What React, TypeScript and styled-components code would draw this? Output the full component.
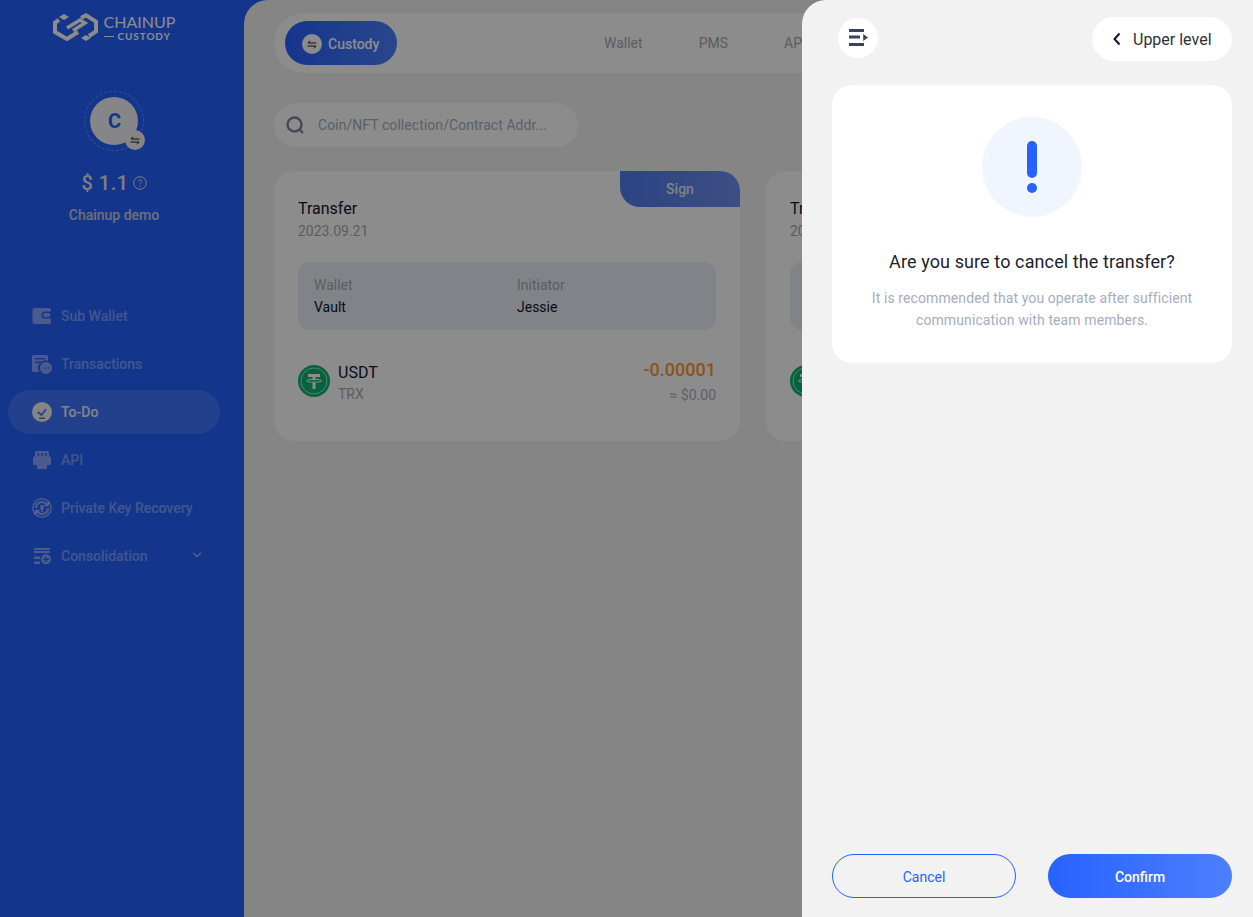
import React from 'react';
import styled, { createGlobalStyle } from 'styled-components';

const GlobalStyle = createGlobalStyle`
  html, body {
    margin: 0;
    height: 100%;
    overflow: hidden;
    font-family: Roboto, "Liberation Sans", sans-serif;
  }
  * { box-sizing: border-box; }
`;

const Page = styled.div`
  display: flex;
  width: 100%;
  height: 100vh;
  background: #2662ff;
  overflow: hidden;
`;

const Sidebar = styled.aside`
  width: 244px;
  flex-shrink: 0;
  display: flex;
  flex-direction: column;
  align-items: center;
  padding: 13px 16px 0 0;
`;

const Logo = styled.div`
  display: flex;
  align-items: flex-start;
  gap: 6px;
  height: 28px;
  margin-left: 0;
  color: #fff;
`;

const LogoText = styled.div`
  display: flex;
  flex-direction: column;
  width: 72px;
`;

const LogoName = styled.span`
  font-family: Lato, sans-serif;
  font-size: 16px;
  line-height: 15px;
  letter-spacing: 0;
  margin-top: 1px;
  white-space: nowrap;
`;

const LogoSub = styled.span`
  display: flex;
  align-items: center;
  gap: 4px;
  margin-top: 2px;
  font-family: Lato, sans-serif;
  font-size: 10px;
  line-height: 10px;
  font-weight: 700;
  letter-spacing: 0.9px;
  white-space: nowrap;
  &::before {
    content: '';
    width: 10px;
    height: 1px;
    background: #fff;
  }
`;

const AvatarRing = styled.div`
  position: relative;
  width: 60px;
  height: 60px;
  margin-top: 50px;
  display: flex;
  align-items: center;
  justify-content: center;
  border-radius: 50%;
  border: 1px dashed rgba(255, 255, 255, 0.3);
`;

const Avatar = styled.div`
  width: 48px;
  height: 48px;
  border-radius: 50%;
  background: #f4f5fa;
  color: #2662ff;
  font-size: 20px;
  font-weight: 700;
  display: flex;
  align-items: center;
  justify-content: center;
  padding-left: 1px;
`;

const SwapBadge = styled.div`
  position: absolute;
  right: -2px;
  bottom: 0;
  width: 20px;
  height: 20px;
  border-radius: 50%;
  background: #f2f2f2;
  color: #1a1a1a;
  display: flex;
  align-items: center;
  justify-content: center;
`;

const Balance = styled.div`
  display: flex;
  align-items: center;
  gap: 4px;
  margin-top: 20px;
  height: 24px;
  color: #e4e6ee;
  font-size: 20px;
  font-weight: 500;
  letter-spacing: 0.5px;
`;

const OrgName = styled.div`
  margin-top: 8px;
  height: 24px;
  line-height: 24px;
  font-size: 14px;
  font-weight: 500;
  color: #c8cde0;
`;

const Menu = styled.nav`
  align-self: stretch;
  display: flex;
  flex-direction: column;
  gap: 4px;
  margin: 67px -16px 0 0;
  padding: 0 24px 0 8px;
`;

const MenuItem = styled.div<{ $active?: boolean }>`
  height: 44px;
  display: flex;
  align-items: center;
  gap: 9px;
  padding: 0 18px 0 24px;
  border-radius: 22px;
  font-size: 14px;
  font-weight: 500;
  background: ${p => (p.$active ? 'rgba(255, 255, 255, 0.12)' : 'transparent')};
  color: ${p => (p.$active ? '#f2f2f2' : 'rgba(255, 255, 255, 0.4)')};
`;

const MenuIcon = styled.span<{ $active?: boolean }>`
  width: 20px;
  height: 20px;
  flex-shrink: 0;
  display: flex;
  color: ${p => (p.$active ? '#f2f2f2' : 'rgba(255, 255, 255, 0.45)')};
`;

const Chevron = styled.span`
  margin: 0 0 2px auto;
  display: flex;
  color: rgba(255, 255, 255, 0.5);
`;

const Main = styled.main`
  flex: 1;
  min-width: 0;
  background: #f2f2f2;
  border-top-left-radius: 24px;
  padding: 13px 0 0 30px;
  overflow: hidden;
`;

const TopBar = styled.div`
  width: 1200px;
  height: 60px;
  display: flex;
  align-items: center;
  padding-left: 11px;
  border-radius: 30px;
  background: #fff;
`;

const ProductPill = styled.div`
  width: 112px;
  height: 44px;
  border-radius: 22px;
  background: linear-gradient(90deg, #2662ff, #4d7fff);
  color: #fff;
  font-size: 14px;
  font-weight: 500;
  display: flex;
  align-items: center;
  gap: 6px;
  padding: 2px 0 0 17px;
`;

const PillBadge = styled.span`
  width: 20px;
  height: 20px;
  border-radius: 50%;
  background: #fff;
  color: #1a1a1a;
  display: flex;
  align-items: center;
  justify-content: center;
`;

const Tabs = styled.div`
  display: flex;
  gap: 56px;
  margin-left: 207px;
  margin-top: -1px;
`;

const Tab = styled.span`
  font-size: 14px;
  color: #a8a8ae;
`;

const SearchBox = styled.div`
  width: 304px;
  height: 44px;
  margin-top: 30px;
  display: flex;
  align-items: center;
  gap: 14px;
  padding-left: 12px;
  border-radius: 22px;
  background: #fff;
  color: #a4adc2;
  font-size: 14px;
  letter-spacing: 0.06px;
`;

const SearchIcon = styled.span`
  display: flex;
  color: #7d8699;
`;

const Cards = styled.div`
  display: flex;
  gap: 26px;
  margin-top: 24px;
`;

const Card = styled.section`
  position: relative;
  width: 466px;
  height: 270px;
  flex-shrink: 0;
  padding: 28px 24px 0;
  border-radius: 20px;
  background: #fff;
  overflow: hidden;
`;

const SignTag = styled.div`
  position: absolute;
  top: 0;
  right: 0;
  width: 120px;
  height: 36px;
  line-height: 36px;
  text-align: center;
  border-bottom-left-radius: 20px;
  background: linear-gradient(90deg, #4f7cf0, #6f8fee);
  color: #e8ecf8;
  font-size: 14px;
  font-weight: 500;
`;

const CardTitle = styled.div`
  font-size: 16px;
  line-height: 20px;
  color: #12152a;
`;

const CardDate = styled.div`
  margin-top: 4px;
  font-size: 14px;
  line-height: 16px;
  color: #a8a8ae;
`;

const InfoBox = styled.div`
  display: grid;
  grid-template-columns: 203px 1fr;
  height: 68px;
  margin-top: 23px;
  padding: 12px 16px;
  border-radius: 12px;
  background: #eaf1f8;
`;

const InfoLabel = styled.div`
  font-size: 14px;
  line-height: 22px;
  color: #a8a8ae;
`;

const InfoValue = styled.div`
  font-size: 14px;
  line-height: 22px;
  color: #12152a;
`;

const AssetRow = styled.div`
  display: flex;
  align-items: flex-start;
  margin-top: 30px;
`;

const CoinIcon = styled.span`
  display: flex;
  margin-top: 5px;
  margin-right: 8px;
`;

const AssetInfo = styled.div`
  padding-top: 3px;
`;

const AssetName = styled.div`
  font-size: 16px;
  line-height: 20px;
  color: #12152a;
`;

const AssetChain = styled.div`
  margin-top: 1px;
  font-size: 14px;
  line-height: 20px;
  color: #a8a8ae;
`;

const AssetAmounts = styled.div`
  margin-left: auto;
  text-align: right;
`;

const Amount = styled.div`
  font-size: 18px;
  line-height: 20px;
  font-weight: 500;
  color: #ff9a2e;
`;

const Fiat = styled.div`
  margin-top: 5px;
  font-size: 14px;
  line-height: 20px;
  color: #a8aebe;
`;

const Overlay = styled.div`
  position: fixed;
  inset: 0;
  background: rgba(0, 0, 0, 0.45);
`;

const Drawer = styled.aside`
  position: fixed;
  top: 0;
  right: 0;
  bottom: 0;
  width: 451px;
  display: flex;
  flex-direction: column;
  padding: 17px 21px 19px 30px;
  border-top-left-radius: 24px;
  background: #f2f2f2;
`;

const DrawerHead = styled.div`
  display: flex;
  justify-content: space-between;
  align-items: flex-start;
  padding-left: 6px;
`;

const CollapseButton = styled.button`
  width: 40px;
  height: 40px;
  margin-top: 1px;
  padding: 0;
  border: 0;
  border-radius: 50%;
  background: #fff;
  color: #3a4257;
  display: flex;
  align-items: center;
  justify-content: center;
`;

const BackButton = styled.button`
  width: 140px;
  height: 44px;
  padding: 0 0 0 20px;
  border: 0;
  border-radius: 22px;
  background: #fff;
  color: #2e313a;
  font-family: inherit;
  font-size: 16px;
  display: flex;
  align-items: center;
  gap: 11px;
`;

const ConfirmCard = styled.div`
  height: 278px;
  margin-top: 24px;
  padding-top: 32px;
  border-radius: 20px;
  background: #fff;
  display: flex;
  flex-direction: column;
  align-items: center;
  text-align: center;
`;

const WarnCircle = styled.div`
  width: 100px;
  height: 100px;
  border-radius: 50%;
  background: #f0f5ff;
  display: flex;
  flex-direction: column;
  align-items: center;
  justify-content: center;
  gap: 5px;
`;

const WarnBar = styled.span`
  width: 10px;
  height: 37px;
  border-radius: 5px;
  background: #2662ff;
`;

const WarnDot = styled.span`
  width: 10px;
  height: 10px;
  border-radius: 50%;
  background: #2662ff;
`;

const ConfirmTitle = styled.div`
  margin-top: 32px;
  font-size: 18px;
  line-height: 26px;
  letter-spacing: 0.11px;
  color: #1c1f2e;
`;

const ConfirmText = styled.div`
  width: 340px;
  margin-top: 12px;
  font-size: 14px;
  line-height: 22px;
  letter-spacing: 0.1px;
  color: #a4adc2;
`;

const DrawerFoot = styled.div`
  margin-top: auto;
  display: flex;
  justify-content: space-between;
`;

const FootButton = styled.button<{ $primary?: boolean }>`
  width: 184px;
  height: 44px;
  padding: 2px 0 0;
  border-radius: 22px;
  font-family: inherit;
  font-size: 14px;
  font-weight: ${p => (p.$primary ? 500 : 400)};
  color: ${p => (p.$primary ? '#fff' : '#2662ff')};
  border: ${p => (p.$primary ? '0' : '1px solid #2662ff')};
  background: ${p => (p.$primary ? 'linear-gradient(90deg, #2662ff, #4d7fff)' : 'transparent')};
`;

const SwapIcon = () => (
  <svg width="10" height="9" viewBox="0 0 10 9" fill="none" stroke="currentColor" strokeWidth="1">
    <path d="M3 .8 1 3h8.500M7 8.200 9 6H.5" />
  </svg>
);

const ChainLogo = () => (
  <svg width="45" height="28" viewBox="0 0 45 28" fill="none" stroke="currentColor" strokeWidth="4">
    <path d="M6 7 2 9.500V19L14 26 25 19" />
    <path d="M14 15 27 7 32 10 20 17.500" strokeWidth="3.500" />
    <path d="M28 5 33 2.300 43 8.500V18.500L36 23" />
    <path d="M11 1 16 4 11 7 6 4Z" fill="currentColor" stroke="none" />
    <path d="M33 22 38 25 33 28 28 25Z" fill="currentColor" stroke="none" />
  </svg>
);

const WalletIcon = () => (
  <svg width="20" height="20" viewBox="0 0 20 20">
    <path
      fill="currentColor"
      fillRule="evenodd"
      d="M2.500 2H17a2 2 0 0 1 2 2v1.500h-6a3.500 3.500 0 0 0 0 7h6V16a2 2 0 0 1-2 2H2.500a2 2 0 0 1-2-2V4a2 2 0 0 1 2-2Z"
    />
    <rect x="11" y="7" width="7.500" height="4" rx="2" fill="currentColor" />
  </svg>
);

const TransactionsIcon = () => (
  <svg width="20" height="20" viewBox="0 0 20 20">
    <path
      fill="currentColor"
      fillRule="evenodd"
      d="M1.500 1H14.500A1.500 1.500 0 0 1 16 2.500V6.800A7.500 7.500 0 0 0 7.300 18H1.500A1.500 1.500 0 0 1 0 16.500v-14A1.500 1.500 0 0 1 1.500 1ZM3 4v1.500h10V4Zm0 3.500V9h6V7.500Z"
    />
    <path
      fill="currentColor"
      fillRule="evenodd"
      d="M14 8a6 6 0 1 1 0 12 6 6 0 0 1 0-12ZM10.800 13.400v1.200H12v-1.200Zm2.600 0v1.200h1.200v-1.200Zm2.600 0v1.200h1.200v-1.200Z"
    />
  </svg>
);

const TodoIcon = () => (
  <svg width="20" height="20" viewBox="0 0 20 20">
    <circle cx="10" cy="10" r="10" fill="currentColor" />
    <path d="M5.800 9.800 9.500 13 14 7.300" fill="none" stroke="#4270f0" strokeWidth="1.700" />
    <path d="M7 16.300h6" stroke="#4270f0" strokeWidth="1.400" />
  </svg>
);

const ApiIcon = () => (
  <svg width="20" height="20" viewBox="0 0 20 20">
    <path
      fill="currentColor"
      fillRule="evenodd"
      d="M4.500 1h11A1.500 1.500 0 0 1 17 2.500V6.500h.5A1.500 1.500 0 0 1 19 8v5.500a1.500 1.500 0 0 1-1.500 1.500H15v3a1 1 0 0 1-1 1H6a1 1 0 0 1-1-1v-3H2.500A1.500 1.500 0 0 1 1 13.500V8a1.500 1.500 0 0 1 1.500-1.500H3v-4A1.500 1.500 0 0 1 4.500 1Zm1 2v3h1.600V3Zm3.700 0v3h1.600V3Zm3.700 0v3h1.600V3Z"
    />
  </svg>
);

const RecoveryIcon = () => (
  <svg width="20" height="20" viewBox="0 0 20 20" fill="none" stroke="currentColor">
    <circle cx="10" cy="10" r="9.200" strokeWidth="1.500" />
    <path d="M4 10A6 6 0 0 1 14.500 6M16 10A6 6 0 0 1 5.500 14" strokeWidth="2.400" />
    <path d="M16.500 3.500v4.300h-4.300M3.500 16.500v-4.300h4.300" strokeWidth="1" fill="currentColor" />
    <circle cx="10" cy="9" r="2.200" fill="currentColor" stroke="none" />
    <path d="M10 10v4" strokeWidth="2" />
  </svg>
);

const ConsolidationIcon = () => (
  <svg width="20" height="20" viewBox="0 0 20 20">
    <path fill="currentColor" d="M2 2h16v2H2ZM2 5h16v2H2ZM2 10.500h6V13H2ZM2 15.500h6V18H2Z" />
    <path
      fill="currentColor"
      fillRule="evenodd"
      d="M14 8.300a5 5 0 1 1 0 10 5 5 0 0 1 0-10Zm-.7 2.200v2.100h-2.100V14h2.100v2.100h1.400V14h2.100v-1.400h-2.100v-2.100Z"
    />
  </svg>
);

const CoinUsdt = () => (
  <svg width="32" height="32" viewBox="0 0 32 32">
    <circle cx="16" cy="16" r="16" fill="#10b272" />
    <circle cx="16" cy="16" r="13" fill="none" stroke="#9aeccb" strokeWidth="1" />
    <path fill="#fff" d="M10 9h12v3h-4.500v3.200c-.9 0-2.100 0-3 0V12H10ZM14.500 17.300h3V24h-3Z" />
    <ellipse cx="16" cy="15.800" rx="7.500" ry="1.500" fill="none" stroke="#fff" strokeWidth="1" />
  </svg>
);

const menu = [
  { label: 'Sub Wallet', icon: <WalletIcon /> },
  { label: 'Transactions', icon: <TransactionsIcon /> },
  { label: 'To-Do', icon: <TodoIcon />, active: true },
  { label: 'API', icon: <ApiIcon /> },
  { label: 'Private Key Recovery', icon: <RecoveryIcon /> },
  { label: 'Consolidation', icon: <ConsolidationIcon />, more: true },
];

// the second card sits under the drawer, only its left edge ever shows
const transfers = [
  { id: 1, initiator: 'Jessie' },
  { id: 2, initiator: '' },
];

const App = () => (
  <Page>
    <GlobalStyle />
    <Sidebar>
      <Logo>
        <ChainLogo />
        <LogoText>
          <LogoName>CHAINUP</LogoName>
          <LogoSub>CUSTODY</LogoSub>
        </LogoText>
      </Logo>
      <AvatarRing>
        <Avatar>C</Avatar>
        <SwapBadge>
          <SwapIcon />
        </SwapBadge>
      </AvatarRing>
      <Balance>
        $ 1.1
        <svg width="14" height="14" viewBox="0 0 14 14" fill="none" stroke="currentColor">
          <circle cx="7" cy="7" r="6.300" />
          <path d="M5.200 5.500a1.800 1.800 0 1 1 2.700 1.600c-.6.300-.9.700-.9 1.300" />
          <path d="M7 9.600v1.200" />
        </svg>
      </Balance>
      <OrgName>Chainup demo</OrgName>
      <Menu>
        {menu.map(item => (
          <MenuItem key={item.label} $active={item.active}>
            <MenuIcon $active={item.active}>{item.icon}</MenuIcon>
            {item.label}
            {item.more && (
              <Chevron>
                <svg width="10" height="6" viewBox="0 0 10 6" fill="none" stroke="currentColor" strokeWidth="1.600">
                  <path d="M1 1l4 3.500L9 1" />
                </svg>
              </Chevron>
            )}
          </MenuItem>
        ))}
      </Menu>
    </Sidebar>

    <Main>
      <TopBar>
        <ProductPill>
          <PillBadge>
            <SwapIcon />
          </PillBadge>
          Custody
        </ProductPill>
        <Tabs>
          <Tab>Wallet</Tab>
          <Tab>PMS</Tab>
          <Tab>API</Tab>
        </Tabs>
      </TopBar>
      <SearchBox>
        <SearchIcon>
          <svg width="18" height="18" viewBox="0 0 18 18" fill="none" stroke="currentColor" strokeWidth="2.400">
            <circle cx="8.500" cy="8.500" r="7" />
            <path d="M13.500 13.500 17 17" />
          </svg>
        </SearchIcon>
        Coin/NFT collection/Contract Addr...
      </SearchBox>
      <Cards>
        {transfers.map(transfer => (
          <Card key={transfer.id}>
            <SignTag>Sign</SignTag>
            <CardTitle>Transfer</CardTitle>
            <CardDate>2023.09.21</CardDate>
            <InfoBox>
              <div>
                <InfoLabel>Wallet</InfoLabel>
                <InfoValue>Vault</InfoValue>
              </div>
              {transfer.initiator && (
                <div>
                  <InfoLabel>Initiator</InfoLabel>
                  <InfoValue>{transfer.initiator}</InfoValue>
                </div>
              )}
            </InfoBox>
            <AssetRow>
              <CoinIcon>
                <CoinUsdt />
              </CoinIcon>
              <AssetInfo>
                <AssetName>USDT</AssetName>
                <AssetChain>TRX</AssetChain>
              </AssetInfo>
              <AssetAmounts>
                <Amount>-0.00001</Amount>
                <Fiat>≈ $0.00</Fiat>
              </AssetAmounts>
            </AssetRow>
          </Card>
        ))}
      </Cards>
    </Main>

    <Overlay />

    <Drawer>
      <DrawerHead>
        <CollapseButton aria-label="Collapse">
          <svg width="20" height="18" viewBox="0 0 20 18" fill="currentColor">
            <path d="M1 0h15v3H1ZM1 6.500h11v3H1ZM1 14h15v3H1ZM15.200 5l4.800 3.500-4.800 3.500Z" />
          </svg>
        </CollapseButton>
        <BackButton>
          <svg width="10" height="14" viewBox="0 0 10 14" fill="none" stroke="#12152a" strokeWidth="2">
            <path d="M7.500 1.500 2.500 7l5 5.500" />
          </svg>
          Upper level
        </BackButton>
      </DrawerHead>
      <ConfirmCard>
        <WarnCircle>
          <WarnBar />
          <WarnDot />
        </WarnCircle>
        <ConfirmTitle>Are you sure to cancel the transfer?</ConfirmTitle>
        <ConfirmText>It is recommended that you operate after sufficient communication with team members.</ConfirmText>
      </ConfirmCard>
      <DrawerFoot>
        <FootButton>Cancel</FootButton>
        <FootButton $primary>Confirm</FootButton>
      </DrawerFoot>
    </Drawer>
  </Page>
);

export default App;
